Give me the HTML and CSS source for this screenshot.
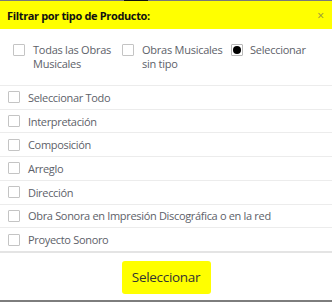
FILE: index.html
```html
<!DOCTYPE html>
<html lang="es">
<head>
<meta charset="utf-8">
<link rel="stylesheet" href="styles.css">
</head>
<body>
<div class="dialog">
  <div class="topline"></div>
  <div class="header">
    <span class="title">Filtrar por tipo de Producto:</span>
    <span class="close">×</span>
  </div>
  <div class="options">
    <label class="opt opt1"><span class="box"></span><span class="otext">Todas las Obras Musicales</span></label>
    <label class="opt opt2"><span class="box"></span><span class="otext">Obras Musicales sin tipo</span></label>
    <label class="opt opt3"><span class="box radio"><span class="dot"></span></span><span class="otext">Seleccionar</span></label>
  </div>
  <ul class="list">
    <li class="row"><span class="box"></span><span>Seleccionar Todo</span></li>
    <li class="row"><span class="box"></span><span>Interpretación</span></li>
    <li class="row"><span class="box"></span><span>Composición</span></li>
    <li class="row"><span class="box"></span><span>Arreglo</span></li>
    <li class="row"><span class="box"></span><span>Dirección</span></li>
    <li class="row"><span class="box"></span><span>Obra Sonora en Impresión Discográfica o en la red</span></li>
    <li class="row"><span class="box"></span><span>Proyecto Sonoro</span></li>
  </ul>
  <div class="footer">
    <button class="btn">Seleccionar</button>
  </div>
  <div class="bottomline"></div>
</div>
</body>
</html>
```
FILE: styles.css
```css
html, body {
  margin: 0;
  padding: 0;
  background: #ffffff;
}
body {
  width: 332px;
  height: 305px;
  overflow: hidden;
  font-family: "Open Sans", "Noto Sans", sans-serif;
  color: #5d6169;
}
.dialog {
  width: 332px;
  display: flex;
  flex-direction: column;
}
.topline {
  height: 1px;
  background: linear-gradient(to right, #7a7a7a 0, #7a7a7a 124px, #111 124px, #111 148px, #7a7a7a 148px);
}
.header {
  height: 28px;
  background: #ffff00;
  display: flex;
  align-items: center;
  justify-content: space-between;
  padding: 0 8px 0 7px;
}
.title {
  font-weight: bold;
  font-size: 11px;
  color: #111;
  letter-spacing: -0.35px;
}
.close {
  font-size: 12px;
  color: #8f8f40;
  line-height: 1;
  margin-top: 1px;
}
.options {
  border-bottom: 1px solid #ececec;
  display: flex;
  align-items: flex-start;
  padding-top: 14px;
  box-sizing: border-box;
  height: 57px;
  font-size: 11px;
  line-height: 14px;
  letter-spacing: -0.25px;
}
.opt {
  display: flex;
  align-items: flex-start;
}
.opt1 { margin-left: 13px; width: 109px; }
.opt2 { width: 109px; }
.opt .box { margin-top: 1px; margin-right: 8px; flex: none; }
.opt1 .otext { width: 90px; }
.opt2 .otext { width: 90px; }
.opt3 .box { margin-right: 7px; }
.box {
  width: 10px;
  height: 10px;
  border: 1px solid #c4c4c4;
  border-radius: 1px;
  background: #fff;
  display: inline-flex;
  align-items: center;
  justify-content: center;
  box-sizing: content-box;
}
.radio {
  border-color: #b8b8b8;
}
.dot {
  width: 8px;
  height: 8px;
  border-radius: 50%;
  background: #000;
}
.list {
  list-style: none;
  margin: 0;
  padding: 0;
  font-size: 11px;
  letter-spacing: -0.32px;
}
.row {
  height: 23.71px;
  box-sizing: border-box;
  border-top: 1px solid #ececec;
  display: flex;
  align-items: center;
  padding-left: 8px;
}
.row:first-child {
  border-top: none;
  height: 22.71px;
}
.row .box {
  margin-right: 8px;
}
.footer {
  border-top: 2px solid #e4e4e4;
  height: 49px;
  box-sizing: border-box;
  display: flex;
  justify-content: center;
  padding-top: 8px;
}
.btn {
  width: 89px;
  height: 33px;
  background: #ffff00;
  border: none;
  border-radius: 3px;
  font-family: "Open Sans", "Noto Sans", sans-serif;
  font-size: 13.5px;
  color: #333;
  padding: 0;
  letter-spacing: -0.3px;
}
.bottomline {
  height: 2px;
  background: #7d7d7d;
}
```
